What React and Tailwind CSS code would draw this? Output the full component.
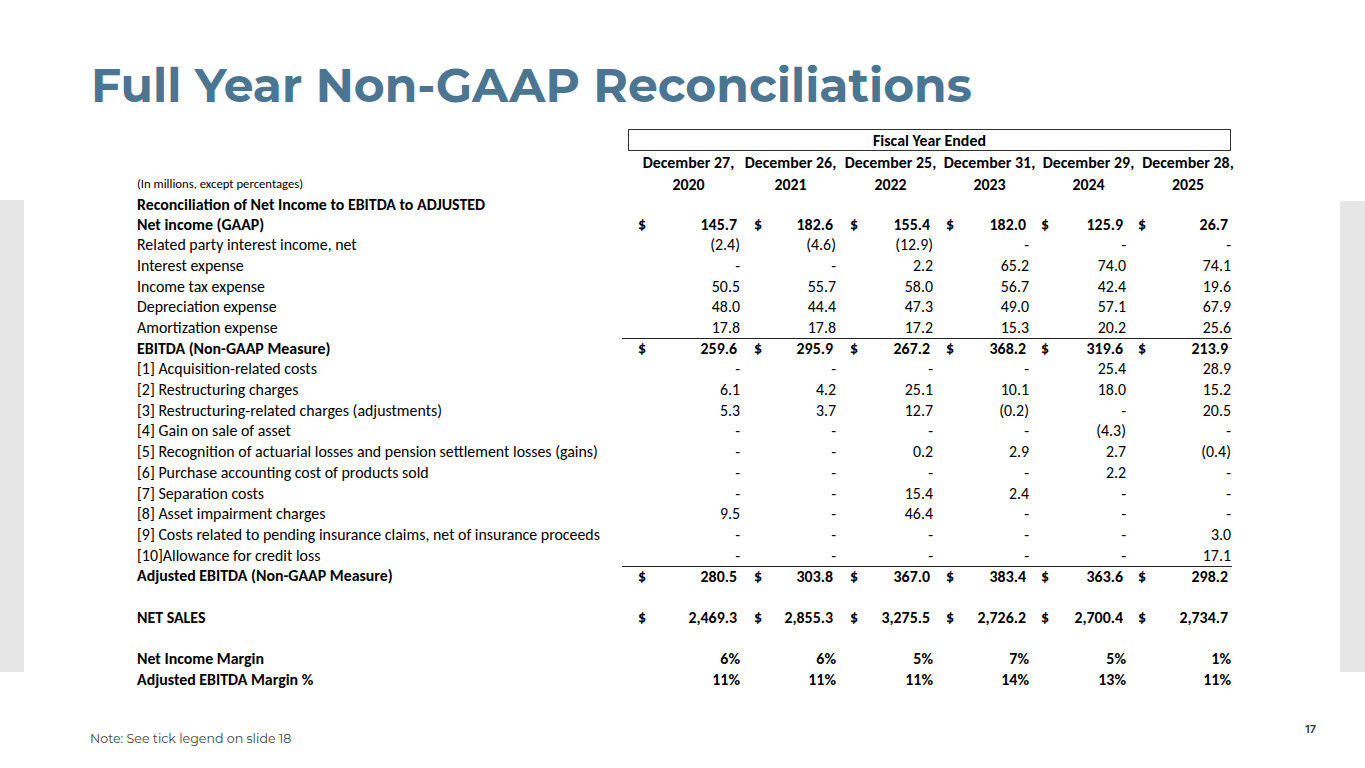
import React from "react";

const COLS = [
  { w: "w-[119px]", pl: "pl-[16px]" },
  { w: "w-[96px]", pl: "pl-[13px]" },
  { w: "w-[97px]", pl: "pl-[13px]" },
  { w: "w-[96px]", pl: "pl-[12px]" },
  { w: "w-[97px]", pl: "pl-[11px]" },
  { w: "w-[105px]", pl: "pl-[11px]" },
];

const HEAD = [
  { w: "w-[103px]", d: "December 27,", y: "2020" },
  { w: "w-[101px]", d: "December 26,", y: "2021" },
  { w: "w-[99px]", d: "December 25,", y: "2022" },
  { w: "w-[99px]", d: "December 31,", y: "2023" },
  { w: "w-[99px]", d: "December 29,", y: "2024" },
  { w: "w-[100px]", d: "December 28,", y: "2025" },
];

const ROWS = [
  { l: "Net income (GAAP)", b: true, $: true, v: ["145.7", "182.6", "155.4", "182.0", "125.9", "26.7"] },
  { l: "Related party interest income, net", v: ["(2.4)", "(4.6)", "(12.9)", "-", "-", "-"] },
  { l: "Interest expense", v: ["-", "-", "2.2", "65.2", "74.0", "74.1"] },
  { l: "Income tax expense", v: ["50.5", "55.7", "58.0", "56.7", "42.4", "19.6"] },
  { l: "Depreciation expense", v: ["48.0", "44.4", "47.3", "49.0", "57.1", "67.9"] },
  { l: "Amortization expense", v: ["17.8", "17.8", "17.2", "15.3", "20.2", "25.6"] },
  { l: "EBITDA (Non-GAAP Measure)", b: true, $: true, line: true, v: ["259.6", "295.9", "267.2", "368.2", "319.6", "213.9"] },
  { l: "[1] Acquisition-related costs", v: ["-", "-", "-", "-", "25.4", "28.9"] },
  { l: "[2] Restructuring charges", v: ["6.1", "4.2", "25.1", "10.1", "18.0", "15.2"] },
  { l: "[3] Restructuring-related charges (adjustments)", v: ["5.3", "3.7", "12.7", "(0.2)", "-", "20.5"] },
  { l: "[4] Gain on sale of asset", v: ["-", "-", "-", "-", "(4.3)", "-"] },
  { l: "[5] Recognition of actuarial losses and pension settlement losses (gains)", v: ["-", "-", "0.2", "2.9", "2.7", "(0.4)"] },
  { l: "[6] Purchase accounting cost of products sold", v: ["-", "-", "-", "-", "2.2", "-"] },
  { l: "[7] Separation costs", v: ["-", "-", "15.4", "2.4", "-", "-"] },
  { l: "[8] Asset impairment charges", v: ["9.5", "-", "46.4", "-", "-", "-"] },
  { l: "[9] Costs related to pending insurance claims, net of insurance proceeds", v: ["-", "-", "-", "-", "-", "3.0"] },
  { l: "[10]Allowance for credit loss", v: ["-", "-", "-", "-", "-", "17.1"] },
  { l: "Adjusted EBITDA (Non-GAAP Measure)", b: true, $: true, line: true, v: ["280.5", "303.8", "367.0", "383.4", "363.6", "298.2"] },
  { l: "", v: null },
  { l: "NET SALES", b: true, $: true, v: ["2,469.3", "2,855.3", "3,275.5", "2,726.2", "2,700.4", "2,734.7"] },
  { l: "", v: null },
  { l: "Net Income Margin", b: true, v: ["6%", "6%", "5%", "7%", "5%", "1%"] },
  { l: "Adjusted EBITDA Margin %", b: true, v: ["11%", "11%", "11%", "14%", "13%", "11%"] },
];

function Row({ r }) {
  return (
    <div className={`flex h-[20.7px] items-center ${r.b ? "font-bold" : ""}`}>
      <div className="w-[485px] whitespace-nowrap">{r.l}</div>
      <div className={`flex h-full ${r.line ? "border-t-[1.5px] border-[#222]" : ""}`}>
        {COLS.map((c, i) => (
          <div key={i} className={`${c.w} ${c.pl} flex h-full items-center justify-between whitespace-nowrap ${r.$ ? "pr-[4px]" : "pr-[1px]"}`}>
            <span>{r.$ ? "$" : ""}</span>
            <span>{r.v ? r.v[i] : ""}</span>
          </div>
        ))}
      </div>
    </div>
  );
}

export default function App() {
  return (
    <div className="relative w-[1365px] h-[768px] overflow-hidden bg-white">
      <div className="absolute left-0 top-[200px] h-[472px] w-[24px] bg-[#e6e6e6]" />
      <div className="absolute right-0 top-[201px] h-[471px] w-[25px] bg-[#e6e6e6]" />

      <div className="relative pl-[91px] pt-[62px]">
        <h1 className="font-['Montserrat','Inter',sans-serif] text-[47.2px] font-bold leading-none text-[#4b7591] whitespace-nowrap">
          Full Year Non-GAAP Reconciliations
        </h1>
      </div>

      <div className="relative ml-[137px] mt-[20px] font-['Carlito','Lato',sans-serif] text-[15.9px] text-black leading-none">
        <div className="flex h-[22px]">
          <div className="w-[491px]" />
          <div className="flex w-[603px] h-[22px] items-center justify-center border border-[#333] pt-[1px] font-bold">
            Fiscal Year Ended
          </div>
        </div>
        <div className="flex h-[23px] items-center font-bold">
          <div className="w-[500px]" />
          {HEAD.map((h, i) => (
            <div key={i} className={`${h.w} text-center whitespace-nowrap`}>{h.d}</div>
          ))}
        </div>
        <div className="flex h-[21px] items-center">
          <div className="w-[500px] text-[12.7px] whitespace-nowrap">(In millions, except percentages)</div>
          {HEAD.map((h, i) => (
            <div key={i} className={`${h.w} text-center font-bold`}>{h.y}</div>
          ))}
        </div>
        <div className="flex h-[19px] items-center font-bold whitespace-nowrap">
          Reconciliation of Net Income to EBITDA to ADJUSTED
        </div>
        {ROWS.map((r, i) => (
          <Row key={i} r={r} />
        ))}
      </div>

      <div className="absolute left-[1305px] top-[721px] font-['Inter',sans-serif] text-[11px] font-semibold text-[#333]">17</div>
      <div className="absolute left-[90px] top-[730px] font-['Montserrat','Inter',sans-serif] text-[12.6px] font-normal text-[#444]">
        Note: See tick legend on slide 18
      </div>
    </div>
  );
}
